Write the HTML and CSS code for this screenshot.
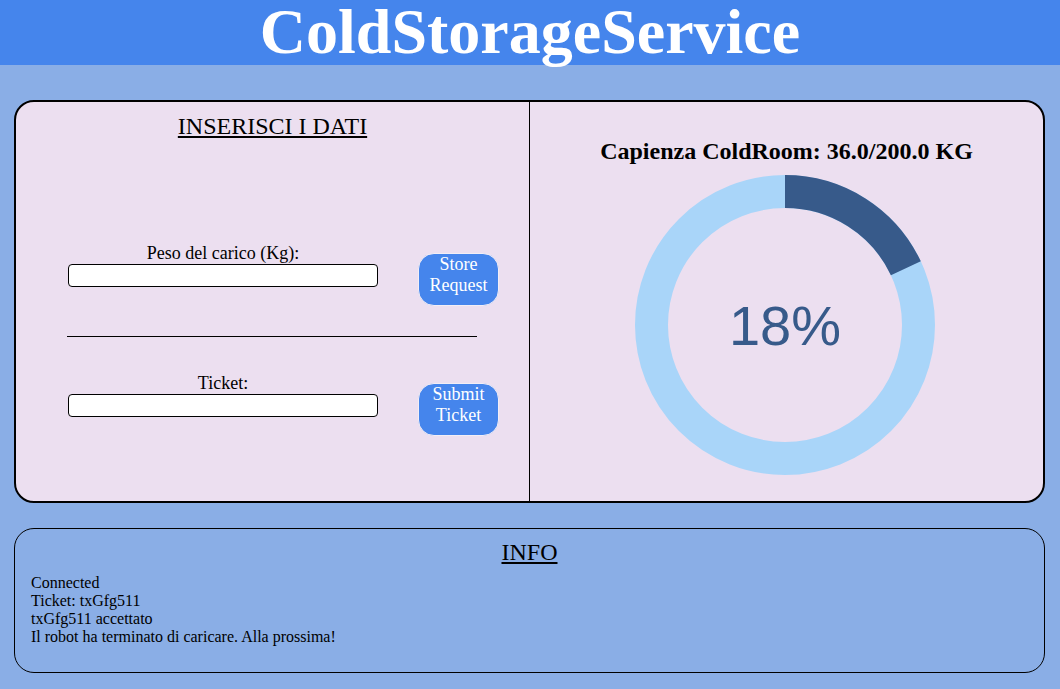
FILE: index.html
```html
<!DOCTYPE html>
<html lang="it">
<head>
<meta charset="utf-8">
<title>ColdStorageService</title>
<link rel="stylesheet" href="styles.css">
</head>
<body>
<header class="topbar">
  <h1 class="brand">ColdStorageService</h1>
</header>
<main class="main-panel">
  <section class="pane pane-form">
    <h2 class="pane-title">INSERISCI I DATI</h2>
    <div class="form-row row-first">
      <div class="field">
        <label class="field-label" for="peso">Peso del carico (Kg):</label>
        <input class="field-input" id="peso" type="text">
      </div>
      <button class="action-btn" type="button">Store Request</button>
    </div>
    <hr class="separator">
    <div class="form-row row-second">
      <div class="field">
        <label class="field-label" for="ticket">Ticket:</label>
        <input class="field-input" id="ticket" type="text">
      </div>
      <button class="action-btn" type="button">Submit Ticket</button>
    </div>
  </section>
  <section class="pane pane-chart">
    <h2 class="capacity-title">Capienza ColdRoom: 36.0/200.0 KG</h2>
    <div class="donut">
      <svg class="donut-svg" width="300" height="300" viewBox="0 0 300 300">
        <circle cx="150" cy="150" r="133.5" fill="none" stroke="#a9d5f9" stroke-width="33"/>
        <circle cx="150" cy="150" r="133.5" fill="none" stroke="#375a8a" stroke-width="33"
                stroke-dasharray="151 700" transform="rotate(-90 150 150)"/>
      </svg>
      <div class="donut-label">18%</div>
    </div>
  </section>
</main>
<section class="info-panel">
  <h2 class="info-title">INFO</h2>
  <div class="log">
    <div>Connected</div>
    <div>Ticket: txGfg511</div>
    <div>txGfg511 accettato</div>
    <div>Il robot ha terminato di caricare. Alla prossima!</div>
  </div>
</section>
</body>
</html>
```
FILE: styles.css
```css
html, body {
  margin: 0;
  padding: 0;
}
body {
  background: #8aaee6;
  font-family: "Liberation Serif", "Times New Roman", serif;
  color: #000;
  width: 1060px;
  height: 689px;
  overflow: hidden;
}
.topbar {
  height: 65px;
  background: #4585ec;
  text-align: center;
}
.brand {
  margin: 0;
  font-size: 64px;
  font-weight: bold;
  line-height: 63px;
  color: #fff;
}
.main-panel {
  margin: 35px 15px 0 14px;
  height: 403px;
  box-sizing: border-box;
  border: 2px solid #000;
  border-radius: 20px;
  background: #ecdff0;
  display: grid;
  grid-template-columns: 513px 1px 513px;
}
.pane-form {
  grid-column: 1;
  border-right: 1px solid #000;
  width: 514px;
  box-sizing: border-box;
  padding-top: 11px;
}
.pane-chart {
  grid-column: 3;
  display: flex;
  flex-direction: column;
  align-items: center;
  padding-top: 36px;
}
.pane-title {
  margin: 0;
  font-size: 24px;
  font-weight: normal;
  text-align: center;
  text-decoration: underline;
  line-height: normal;
}
.form-row {
  display: flex;
  align-items: flex-start;
  padding-left: 52px;
  gap: 40px;
}
.row-first {
  margin-top: 103px;
}
.row-second {
  margin-top: 36px;
}
.field {
  display: flex;
  flex-direction: column;
  width: 310px;
}
.field-label {
  font-size: 18px;
  text-align: center;
  line-height: normal;
}
.field-input {
  width: 310px;
  height: 23px;
  box-sizing: border-box;
  border: 1px solid #000;
  border-radius: 4px;
  background: #fff;
  margin: 0;
  padding: 0 4px;
}
.action-btn {
  margin-top: 10px;
  width: 81px;
  height: 53px;
  box-sizing: border-box;
  padding: 0 0 11px;
  border: 1px solid #f2eef6;
  border-radius: 16px;
  background: #4585ec;
  color: #fff;
  font-family: "Liberation Serif", "Times New Roman", serif;
  font-size: 18px;
  line-height: normal;
}
.separator {
  margin: 30px 0 0 51px;
  width: 410px;
  height: 0;
  border: none;
  border-top: 1px solid #000;
}
.capacity-title {
  margin: 0;
  font-size: 24px;
  font-weight: bold;
  line-height: normal;
}
.donut {
  position: relative;
  width: 300px;
  height: 300px;
  margin-top: 10px;
  margin-right: 3px;
}
.donut-svg {
  display: block;
}
.donut-label {
  position: absolute;
  inset: 0;
  display: flex;
  align-items: center;
  justify-content: center;
  font-family: "Liberation Sans", Arial, sans-serif;
  font-size: 56px;
  color: #375a8a;
}
.info-panel {
  margin: 25px 15px 0 14px;
  height: 145px;
  box-sizing: border-box;
  border: 1px solid #000;
  border-radius: 20px;
  padding: 10px 16px 0;
}
.info-title {
  margin: 0;
  font-size: 24px;
  font-weight: normal;
  text-align: center;
  text-decoration: underline;
  line-height: normal;
}
.log {
  margin-top: 8px;
  font-size: 16px;
  line-height: normal;
}
```
